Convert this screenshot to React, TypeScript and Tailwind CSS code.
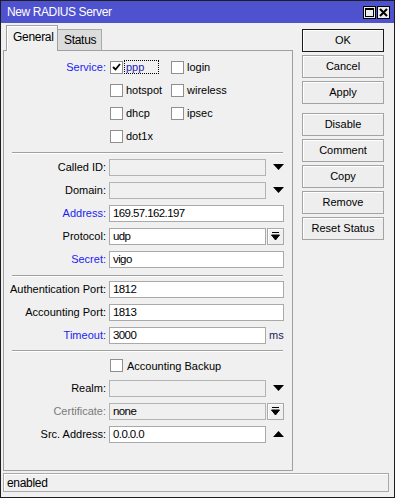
import React from "react";

const blue = "text-[#1c1cf0]";

function Checkbox({ checked }: { checked?: boolean }) {
  return (
    <span className="w-[13px] h-[13px] border border-[#8f8f8f] bg-white flex items-center justify-center shrink-0">
      {checked && (
        <svg width="9" height="8" viewBox="0 0 9 8">
          <path d="M1 4 L3.5 6.5 L8 1" stroke="#000" strokeWidth="1.8" fill="none" />
        </svg>
      )}
    </span>
  );
}

function CheckItem({ label, checked, focus }: { label: string; checked?: boolean; focus?: boolean }) {
  return (
    <div className="flex items-center w-[61px]">
      <Checkbox checked={checked} />
      <span
        className={
          focus
            ? "ml-[1px] px-[1px] border border-dotted border-black text-[#2323b8] w-[35px] leading-[12px]"
            : "ml-[3px]"
        }
      >
        {label}
      </span>
    </div>
  );
}

function DownArrow() {
  return (
    <svg width="11" height="6" viewBox="0 0 11 6">
      <path d="M0 0 H11 L5.5 6 Z" fill="#000" />
    </svg>
  );
}

function Row({
  label,
  labelClass = "text-black",
  children,
}: {
  label: string;
  labelClass?: string;
  children: React.ReactNode;
}) {
  return (
    <div className="flex items-center h-[23px]">
      <div className={`w-[102px] text-right ${labelClass}`}>{label}:</div>
      <div className="ml-[3px] flex items-center">{children}</div>
    </div>
  );
}

function Input({ value = "", width = 175, disabled }: { value?: string; width?: number; disabled?: boolean }) {
  return (
    <div
      className={`h-[17px] border flex items-center pl-[3px] text-[11.5px] tracking-[-0.6px] ${
        disabled ? "border-[#b4b4b4] bg-[#f0f0f0]" : "border-[#a9a9a9] bg-white"
      }`}
      style={{ width }}
    >
      {value}
    </div>
  );
}

function Sep() {
  return (
    <div className="ml-[8px] w-[271px] border-t border-[#a0a0a0] border-b border-b-white" />
  );
}

function Btn({ label, primary }: { label: string; primary?: boolean }) {
  return (
    <div
      className={`h-[23px] w-[82px] flex items-center justify-center bg-[#eeeeee] border ${
        primary ? "border-[#1a1a1a]" : "border-[#a3a3a3]"
      } shadow-[inset_1px_1px_0_#ffffff]`}
    >
      {label}
    </div>
  );
}

export default function App() {
  return (
    <div className="w-[395px] h-[498px] bg-[#f0f0f0] border border-[#1e1e1e] flex flex-col font-['Liberation_Sans',Arial,sans-serif] text-[11px] text-black overflow-hidden">
      {/* title bar */}
      <div className="h-[22px] bg-[#4f52cf] flex items-center pl-[6px] pr-[4px] shrink-0">
        <span className="text-white text-[12px] tracking-[-0.4px]">New RADIUS Server</span>
        <div className="ml-auto flex gap-[1px]">
          <div className="w-[13px] h-[13px] bg-[#ededed] border border-black flex items-center justify-center">
            <div className="w-[9px] h-[9px] border border-black border-t-2" />
          </div>
          <div className="w-[13px] h-[13px] bg-[#ededed] border border-black flex items-center justify-center">
            <svg width="9" height="9" viewBox="0 0 9 9">
              <path d="M1 1 L8 8 M8 1 L1 8" stroke="#000" strokeWidth="2" />
            </svg>
          </div>
        </div>
      </div>

      <div className="flex flex-1 min-h-0">
        {/* left: tabs + panel */}
        <div className="ml-[2px] w-[290px] flex flex-col">
          <div className="flex items-end h-[27px] pl-[3px] relative z-10">
            <div className="h-[26px] w-[52px] border border-b-0 border-[#a0a0a0] bg-[#f0f0f0] shadow-[inset_1px_1px_0_#ffffff] flex items-center pl-[6px] text-[12px] tracking-[-0.3px] mb-[-1px] pb-[2px]">
              General
            </div>
            <div className="h-[21px] w-[44px] border border-l-0 border-b-0 border-[#a9a9a9] bg-[#dcdcdc] flex items-center pl-[6px] text-[12px] tracking-[-0.3px]">
              Status
            </div>
          </div>
          <div className="h-[422px] border border-[#a0a0a0] bg-[#f0f0f0] pt-[5px]">
            {/* service checkboxes */}
            <div className="flex h-[23px] items-center">
              <div className={`w-[102px] text-right ${blue}`}>Service:</div>
              <div className="ml-[4px] flex gap-0">
                <CheckItem label="ppp" checked focus />
                <CheckItem label="login" />
              </div>
            </div>
            <div className="flex h-[23px] items-center pl-[106px]">
              <CheckItem label="hotspot" />
              <CheckItem label="wireless" />
            </div>
            <div className="flex h-[23px] items-center pl-[106px]">
              <CheckItem label="dhcp" />
              <CheckItem label="ipsec" />
            </div>
            <div className="flex h-[23px] items-center pl-[106px]">
              <CheckItem label="dot1x" />
            </div>
            <div className="mt-[4px]" />
            <Sep />
            <div className="mt-[2px]" />
            <Row label="Called ID">
              <Input width={157} disabled />
              <span className="ml-[7px]">
                <DownArrow />
              </span>
            </Row>
            <Row label="Domain">
              <Input width={157} disabled />
              <span className="ml-[7px]">
                <DownArrow />
              </span>
            </Row>
            <Row label="Address" labelClass={blue}>
              <Input value="169.57.162.197" />
            </Row>
            <Row label="Protocol">
              <Input value="udp" width={157} />
              <div className="ml-[1px] w-[17px] h-[17px] border border-[#a9a9a9] shadow-[inset_1px_1px_0_#ffffff] flex items-center justify-center">
                <svg width="9" height="9" viewBox="0 0 9 9">
                  <path d="M1 0.5 H8 M0.5 3 H8.5 L4.5 8 Z" stroke="#000" strokeWidth="1" fill="#000" />
                </svg>
              </div>
            </Row>
            <Row label="Secret" labelClass={blue}>
              <Input value="vigo" />
            </Row>
            <div className="mt-[4px]" />
            <Sep />
            <div className="mt-[1px]" />
            <Row label="Authentication Port">
              <Input value="1812" />
            </Row>
            <Row label="Accounting Port">
              <Input value="1813" />
            </Row>
            <Row label="Timeout" labelClass={blue}>
              <Input value="3000" width={157} />
              <span className="ml-[3px] text-[#1c1c5a]">ms</span>
            </Row>
            <div className="mt-[3px]" />
            <Sep />
            <div className="mt-[3px]" />
            <div className="flex h-[22px] items-center pl-[106px]">
              <Checkbox />
              <span className="ml-[4px]">Accounting Backup</span>
            </div>
            <Row label="Realm">
              <Input width={157} disabled />
              <span className="ml-[7px]">
                <DownArrow />
              </span>
            </Row>
            <Row label="Certificate" labelClass="text-[#7a7a7a]">
              <Input value="none" width={157} disabled />
              <div className="ml-[1px] w-[17px] h-[17px] border border-[#a9a9a9] shadow-[inset_1px_1px_0_#ffffff] flex items-center justify-center">
                <svg width="9" height="9" viewBox="0 0 9 9">
                  <path d="M1 0.5 H8 M0.5 3 H8.5 L4.5 8 Z" stroke="#000" strokeWidth="1" fill="#000" />
                </svg>
              </div>
            </Row>
            <Row label="Src. Address">
              <Input value="0.0.0.0" width={157} />
              <span className="ml-[7px]">
                <svg width="11" height="6" viewBox="0 0 11 6">
                  <path d="M0 6 H11 L5.5 0 Z" fill="#000" />
                </svg>
              </span>
            </Row>
          </div>
        </div>

        {/* right buttons */}
        <div className="ml-[9px] pt-[6px] flex flex-col gap-[3px]">
          <Btn label="OK" primary />
          <Btn label="Cancel" />
          <Btn label="Apply" />
          <div className="h-[3px]" />
          <Btn label="Disable" />
          <Btn label="Comment" />
          <Btn label="Copy" />
          <Btn label="Remove" />
          <Btn label="Reset Status" />
        </div>
      </div>

      {/* status bar */}
      <div className="mx-[2px] mb-[5px] mt-[2px] h-[19px] w-[386px] border border-[#a9a9a9] shadow-[inset_1px_1px_0_#ffffff] flex items-center pl-[3px] text-[12px] tracking-[-0.3px]">
        enabled
      </div>
    </div>
  );
}
